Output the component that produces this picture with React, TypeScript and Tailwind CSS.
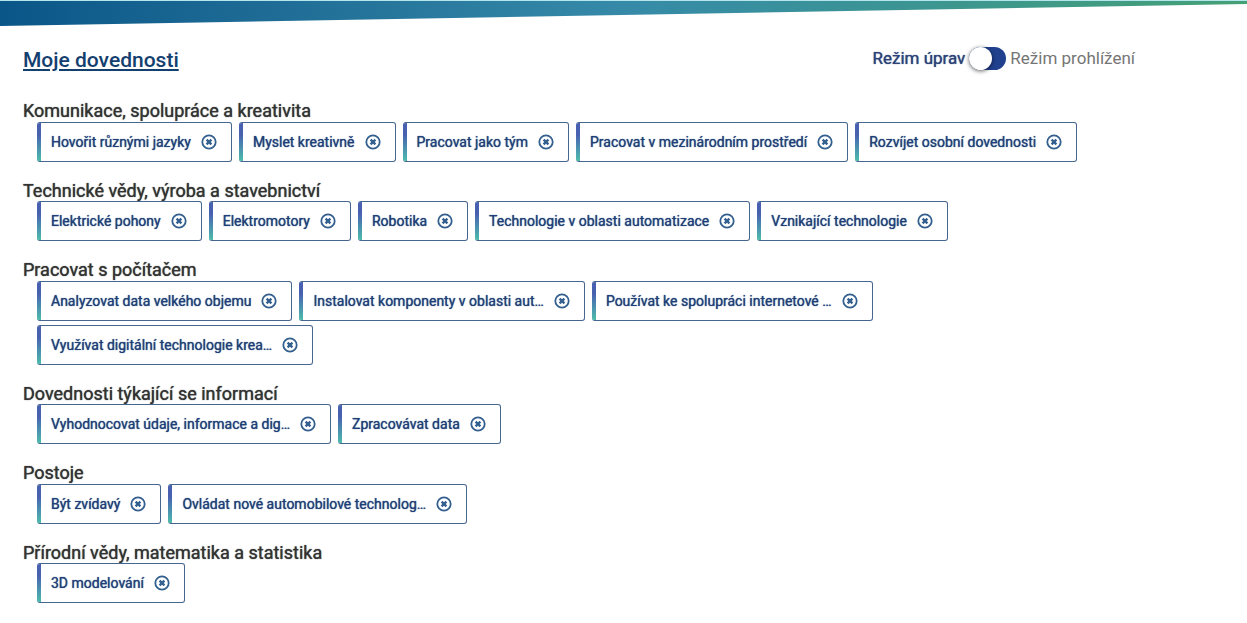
import { useState } from "react";

type SkillGroup = { title: string; skills: string[] };

const initialGroups: SkillGroup[] = [
  {
    title: "Komunikace, spolupráce a kreativita",
    skills: [
      "Hovořit různými jazyky",
      "Myslet kreativně",
      "Pracovat jako tým",
      "Pracovat v mezinárodním prostředí",
      "Rozvíjet osobní dovednosti",
    ],
  },
  {
    title: "Technické vědy, výroba a stavebnictví",
    skills: [
      "Elektrické pohony",
      "Elektromotory",
      "Robotika",
      "Technologie v oblasti automatizace",
      "Vznikající technologie",
    ],
  },
  {
    title: "Pracovat s počítačem",
    skills: [
      "Analyzovat data velkého objemu",
      "Instalovat komponenty v oblasti aut…",
      "Používat ke spolupráci internetové …",
      "Využívat digitální technologie krea…",
    ],
  },
  {
    title: "Dovednosti týkající se informací",
    skills: ["Vyhodnocovat údaje, informace a dig…", "Zpracovávat data"],
  },
  {
    title: "Postoje",
    skills: ["Být zvídavý", "Ovládat nové automobilové technolog…"],
  },
  {
    title: "Přírodní vědy, matematika a statistika",
    skills: ["3D modelování"],
  },
];

function RemoveIcon() {
  return (
    <svg viewBox="0 0 16 16" className="size-4" fill="none" stroke="currentColor" aria-hidden="true">
      <circle cx="8" cy="8" r="6.7" strokeWidth="1.8" />
      <path d="M5.6 5.6l4.8 4.8M10.4 5.6l-4.8 4.8" strokeWidth="2.4" />
    </svg>
  );
}

function SkillChip({ name, onRemove }: { name: string; onRemove: () => void }) {
  return (
    <li className="flex h-10 items-center overflow-hidden rounded-[3px] border border-l-0 border-[#44668f] pr-[14px]">
      <span className="w-1 self-stretch bg-linear-to-b from-[#4860b0] from-30% to-[#4cbcaa]" />
      <span className="pl-[10px] text-sm text-[#1f4077] [text-shadow:0_0_1px_currentColor]">{name}</span>
      <button type="button" aria-label={name} onClick={onRemove} className="ml-[10px] cursor-pointer text-[#34608f]">
        <RemoveIcon />
      </button>
    </li>
  );
}

export default function App() {
  const [groups, setGroups] = useState(initialGroups);
  const [viewing, setViewing] = useState(false);

  const remove = (title: string, skill: string) =>
    setGroups((all) =>
      all.map((g) => (g.title === title ? { ...g, skills: g.skills.filter((s) => s !== skill) } : g)),
    );

  return (
    <div className="min-h-screen bg-white font-['Roboto',sans-serif]">
      <div className="h-[26px] border-t border-[#b5e6ee] bg-linear-to-r from-[#0a5688] via-[#368aa8] to-[#45a075] [clip-path:polygon(0_0,100%_0,100%_4px,0_100%)]" />
      <main className="pt-5 pr-28 pl-[23px]">
        <header className="flex items-start justify-between">
          <h1 className="text-[21px] leading-7 font-medium text-[#14406f] underline decoration-2 underline-offset-2">Moje dovednosti</h1>
          <div className="flex items-center gap-1 text-[17px] leading-6">
            <label htmlFor="mode" className="text-[#2c4278] [text-shadow:0_0_1px_currentColor]">Režim úprav</label>
            <input
              id="mode"
              type="checkbox"
              role="switch"
              checked={viewing}
              onChange={(e) => setViewing(e.target.checked)}
              className="h-[23px] w-[37px] cursor-pointer appearance-none rounded-full bg-[#21418f] before:block before:size-[23px] before:rounded-full before:bg-white before:shadow-[0_1px_4px_rgba(0,0,0,0.6)] before:content-[''] checked:before:ml-[14px]"
            />
            <label htmlFor="mode" className="text-[#757575]">Režim prohlížení</label>
          </div>
        </header>
        <div className="flex flex-col gap-[18px] pt-[26px]">
          {groups.map((g) => (
            <section key={g.title}>
              <h2 className="text-lg leading-tight text-[#333333] [text-shadow:0_0_1px_currentColor]">{g.title}</h2>
              <ul className="-mt-px flex flex-wrap gap-x-[7px] gap-y-1 pl-[14px]">
                {g.skills.map((s) => (
                  <SkillChip key={s} name={s} onRemove={() => remove(g.title, s)} />
                ))}
              </ul>
            </section>
          ))}
        </div>
      </main>
    </div>
  );
}
